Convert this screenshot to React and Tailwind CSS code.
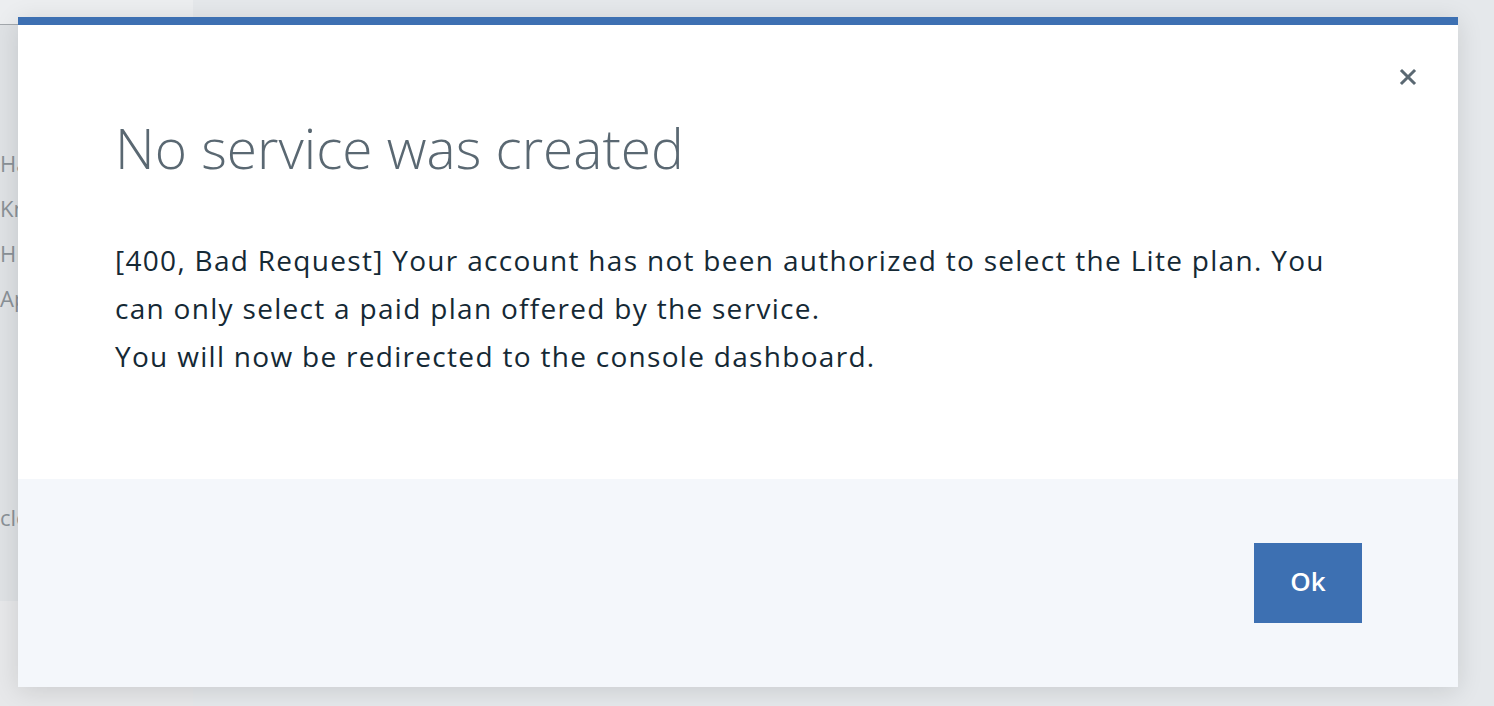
import React from 'react';

const font = { fontFamily: '"Open Sans", "Noto Sans", sans-serif' };

export default function App() {
  const sideItems = ['Hardware', 'Knowledge', 'HEAD', 'Apps'];

  return (
    <div className="relative h-[706px] w-full overflow-hidden bg-[#e5e8eb]" style={font}>
      {/* page behind the overlay */}
      <div className="flex h-full">
        <div className="flex w-[193px] flex-col">
          <div className="h-[25px] shrink-0 border-b border-[#a3a8ad] bg-[#eceef0]" />
          <div className="flex h-[576px] flex-col bg-[#dfe2e5] pt-[116px] text-[22px] leading-[45px] text-[#8a9197]">
            {sideItems.map((t) => (
              <div key={t}>{t}</div>
            ))}
            <div className="mt-[174px]">clear</div>
          </div>
          <div className="flex-1 bg-[#e7e8ea]" />
        </div>
        <div className="flex-1" />
      </div>

      {/* modal */}
      <div className="absolute left-[18px] top-[17px] flex h-[670px] w-[1440px] flex-col border-t-[8px] border-[#3d70b2] bg-white shadow-[0_4px_24px_rgba(0,0,0,0.12)]">
        <div className="relative flex-1 pl-[97px] pr-[100px] pt-[91px]">
          <button className="absolute right-[40px] top-[42px] flex h-[20px] w-[20px] items-center justify-center text-[#5a6872]">
            <svg viewBox="0 0 20 20" width="20" height="20" fill="none" stroke="currentColor" strokeWidth="3" strokeLinecap="square">
              <path d="M4 4 L16 16 M16 4 L4 16" />
            </svg>
          </button>
          <h1 className="text-[55px] font-light leading-[64px] text-[#5a6872]">No service was created</h1>
          <div className="mt-[56px] text-[28px] leading-[48px] tracking-[1.3px] text-[#152935]">
            <p>[400, Bad Request] Your account has not been authorized to select the Lite plan. You can only select a paid plan offered by the service.</p>
            <p>You will now be redirected to the console dashboard.</p>
          </div>
        </div>
        <div className="flex h-[208px] items-center justify-end bg-[#f4f7fb] pr-[96px]">
          <button className="h-[80px] w-[108px] bg-[#3d70b2] pb-[4px] text-[26px] font-semibold text-white">Ok</button>
        </div>
      </div>
    </div>
  );
}
